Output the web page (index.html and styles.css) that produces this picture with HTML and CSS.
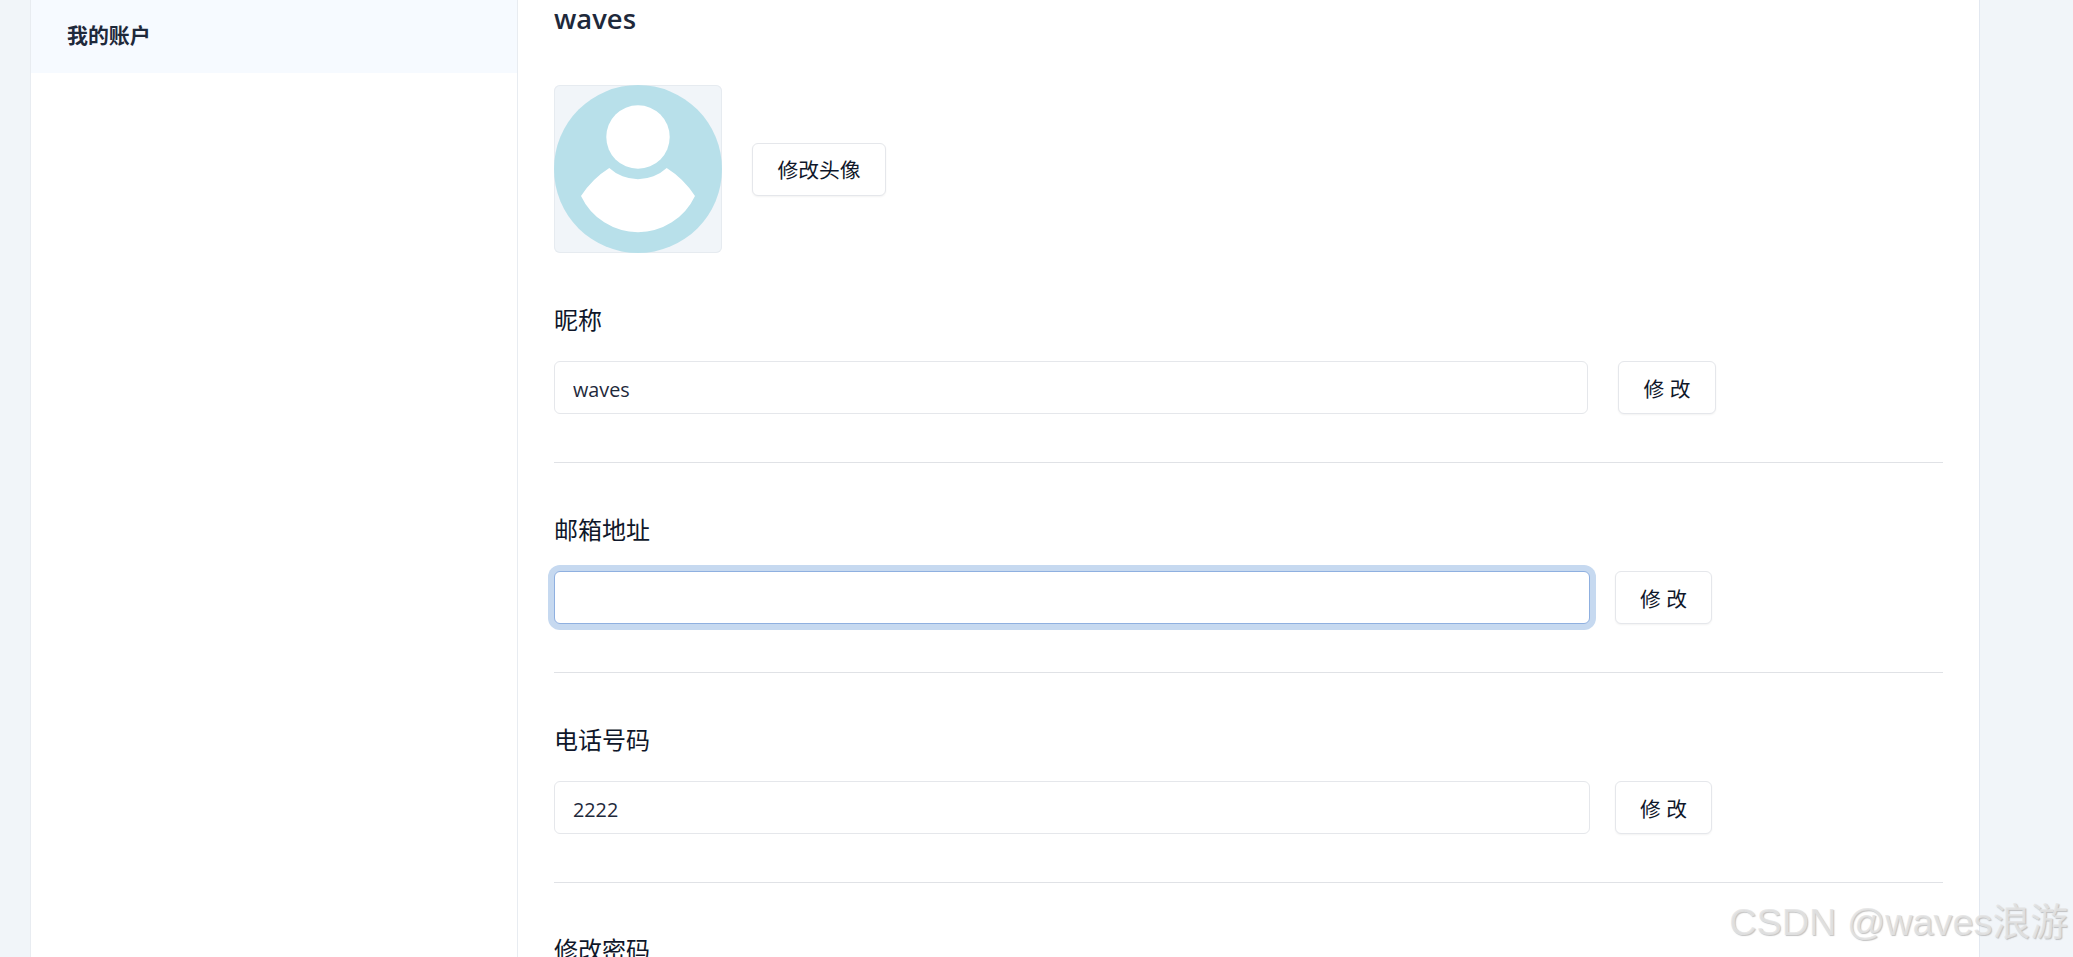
FILE: index.html
```html
<!DOCTYPE html>
<html lang="zh-CN">
<head>
<meta charset="utf-8">
<title>我的账户</title>
<link rel="stylesheet" href="styles.css">
</head>
<body>
<div class="shell">
  <aside class="sidebar">
    <div class="nav-item">我的账户</div>
  </aside>
  <main class="main">
    <h2 class="username">waves</h2>
    <div class="avatar-row">
      <div class="avatar">
        <svg viewBox="0 0 168 168" width="168" height="168">
          <circle cx="84" cy="84" r="84" fill="#b8e0ea"/>
          <circle cx="84" cy="52" r="31.7" fill="#fff"/>
          <path d="M55.3 83 A42.3 42.3 0 0 0 112.7 83 A92 92 0 0 1 141 111 A63 63 0 0 1 27 111 A92 92 0 0 1 55.3 83 Z" fill="#fff"/>
        </svg>
      </div>
      <button class="btn btn-avatar" type="button">修改头像</button>
    </div>

    <section class="field">
      <div class="label">昵称</div>
      <div class="row row-wide">
        <input class="input" type="text" value="waves">
        <button class="btn btn-edit" type="button">修 改</button>
      </div>
    </section>
    <hr class="divider">

    <section class="field">
      <div class="label">邮箱地址</div>
      <div class="row">
        <input class="input input-focus" type="text" value="">
        <button class="btn btn-edit" type="button">修 改</button>
      </div>
    </section>
    <hr class="divider">

    <section class="field">
      <div class="label">电话号码</div>
      <div class="row">
        <input class="input" type="text" value="2222">
        <button class="btn btn-edit" type="button">修 改</button>
      </div>
    </section>
    <hr class="divider">

    <section class="field">
      <div class="label">修改密码</div>
    </section>
  </main>
</div>
<div class="watermark">CSDN @waves浪游</div>
</body>
</html>
```
FILE: styles.css
```css
* { box-sizing: border-box; }
html, body { height: 100%; }
body {
  margin: 0;
  height: 957px;
  overflow: hidden;
  background: #f1f5f9;
  color: #1e293b;
  font-family: "Open Sans", "Noto Sans CJK SC", sans-serif;
}
.shell {
  display: flex;
  width: 1950px;
  height: 957px;
  margin-left: 30px;
  background: #fff;
  border-left: 1px solid #e8ecf1;
  border-right: 1px solid #e2e8f0;
}
.sidebar {
  flex: 0 0 487px;
  border-right: 1px solid #e8ecf1;
}
.nav-item {
  height: 73px;
  padding: 17px 0 0 36px;
  background: #f6faff;
  font-size: 20.9px;
  line-height: 36px;
  font-weight: 600;
}
.main {
  flex: 1;
  padding: 0 36px;
}
.username {
  margin: -1px 0 0;
  height: 41px;
  font-size: 27.4px;
  line-height: 40px;
  font-weight: 600;
}
.avatar-row {
  display: flex;
  align-items: center;
  gap: 30px;
  margin-top: 45px;
  margin-bottom: 51px;
}
.avatar {
  width: 168px;
  height: 168px;
  background: #f1f5f9;
  border-radius: 6px;
  box-shadow: inset 0 0 0 1px #e6ebf0;
  overflow: hidden;
}
.avatar svg { display: block; }
.btn {
  height: 53px;
  border: 1px solid #e5e7eb;
  border-radius: 6px;
  background: #fff;
  color: #0f172a;
  box-shadow: 0 1px 2px rgba(0, 0, 0, .05);
  font-family: inherit;
  font-size: 20.8px;
  font-weight: 400;
  padding: 0;
}
.btn-avatar { width: 134px; }
.btn-edit { flex: 0 0 97px; }
.label {
  height: 32px;
  margin-bottom: 25px;
  color: #0f172a;
  font-size: 24px;
  line-height: 32px;
  font-weight: 400;
}
.row {
  display: flex;
  gap: 25px;
  width: 1158px;
}
.row-wide {
  gap: 30px;
  width: 1162px;
}
.row-wide .btn-edit { flex-basis: 98px; }
.input {
  flex: 1;
  min-width: 0;
  height: 53px;
  padding: 4px 18px 0;
  border: 1px solid #e5e7eb;
  border-radius: 6px;
  background: #fff;
  color: #1e293b;
  font-family: inherit;
  font-size: 19.8px;
  outline: none;
}
.input-focus {
  border-color: #8fb0e0;
  box-shadow: 0 0 0 6px #c6d9f0;
}
.divider {
  height: 1px;
  margin: 48px 0 51px;
  border: 0;
  background: #e0e2e6;
}
.watermark {
  position: absolute;
  right: 5px;
  bottom: 15px;
  font-family: "Liberation Sans", "Noto Sans CJK SC", sans-serif;
  font-size: 37.8px;
  line-height: 40px;
  color: rgba(228, 228, 228, .85);
  text-shadow: 1px 1px 1px rgba(170, 170, 170, .7);
  white-space: nowrap;
}
```
